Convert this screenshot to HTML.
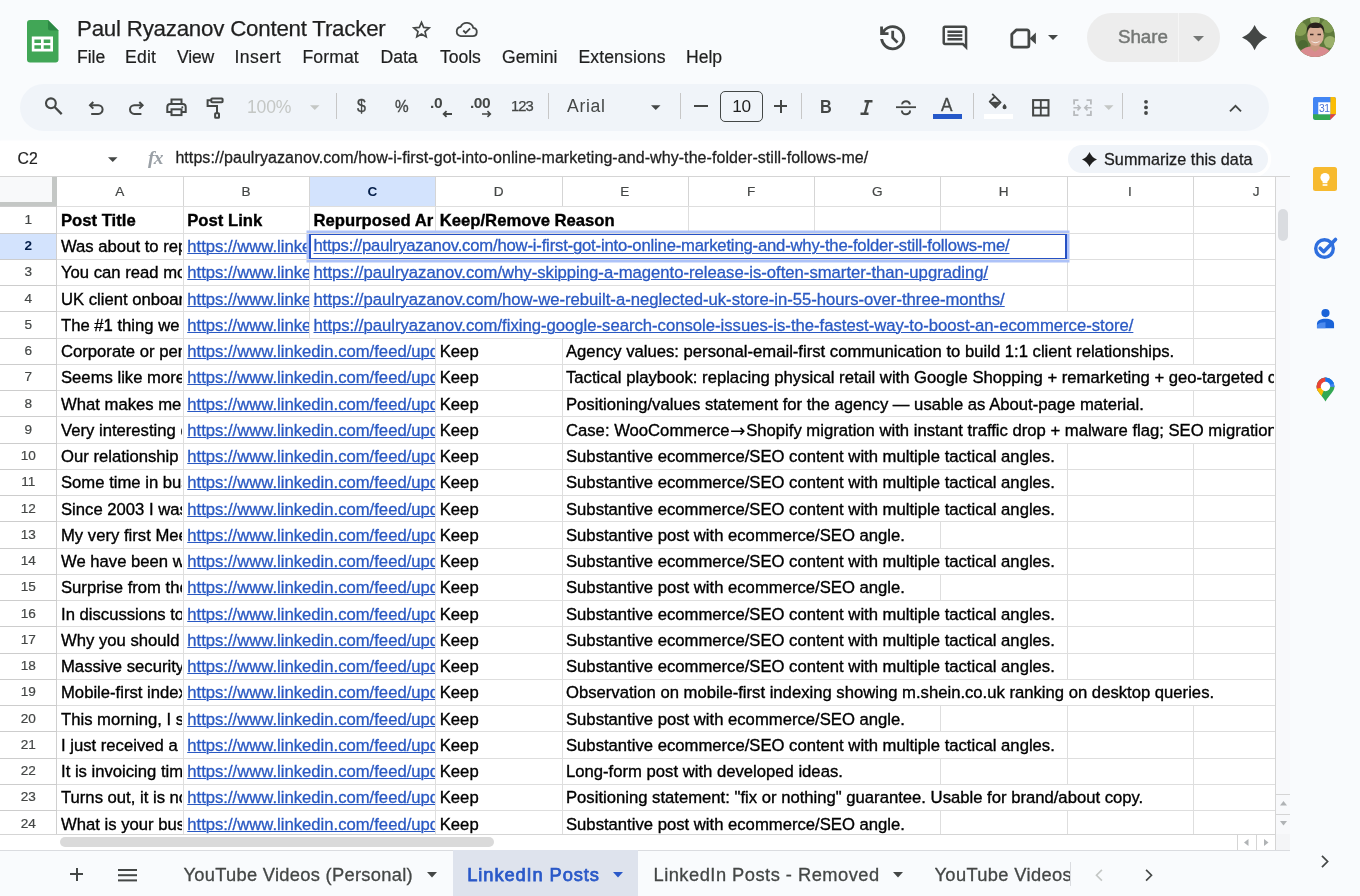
<!DOCTYPE html>
<html lang="en"><head><meta charset="utf-8"><title>Paul Ryazanov Content Tracker - Google Sheets</title>
<style>
*{box-sizing:border-box;margin:0;padding:0}
html,body{width:1360px;height:896px;overflow:hidden;background:#f9fbfd;font-family:"Liberation Sans",Arial,sans-serif;color:#1f1f1f}
.abs{position:absolute}
#app{position:absolute;left:0;top:0;width:1360px;height:896px;overflow:hidden;will-change:transform}
svg{display:block;position:absolute;overflow:visible}
/* ---------- title / menus ---------- */
#title{left:77px;top:13.5px;font-size:22.3px;line-height:30px;color:#1f1f1f;white-space:nowrap;letter-spacing:-0.215px;-webkit-text-stroke:.25px #1f1f1f}
.menu{top:46px;font-size:17.6px;line-height:22px;color:#1f1f1f;white-space:nowrap;letter-spacing:-0.05px;-webkit-text-stroke:.2px #1f1f1f}
/* ---------- toolbar ---------- */
#toolbar{left:20px;top:83.5px;width:1249px;height:47px;border-radius:24px;background:#f0f4f9}
.tsep{top:93px;width:1px;height:26px;background:#c7c7c7}
.ttxt{white-space:nowrap;color:#444746}
/* ---------- formula bar ---------- */
#fbar{left:0;top:141px;width:1271px;height:35.5px;background:#fff;border-radius:0 17.5px 17.5px 0;box-shadow:0 -1px 2px rgba(255,255,255,.7)}
#namebox{left:17.5px;top:149px;font-size:15.8px;line-height:20px;color:#1f1f1f;-webkit-text-stroke:.2px #1f1f1f}
#ftext{left:175.4px;top:148px;font-size:16px;line-height:20px;color:#1f1f1f;white-space:nowrap;letter-spacing:0.068px;-webkit-text-stroke:.28px #1f1f1f}
#summ{left:1068px;top:145px;width:200px;height:28px;border-radius:14px;background:#f0f4f9}
#summ span{position:absolute;left:36px;top:4px;font-size:16.2px;line-height:20px;color:#1f1f1f;white-space:nowrap;letter-spacing:.05px;-webkit-text-stroke:.3px #1f1f1f}
/* ---------- grid ---------- */
#gridwrap{left:0;top:176px;width:1290px;height:674px;background:#fff}
#grid{left:0;top:0;width:1275px;height:834px;overflow:hidden}
.hl{position:absolute;left:0;width:1275px;height:1px;background:linear-gradient(90deg,#cdcdcd 0,#cdcdcd 57px,#dedede 57px);z-index:2}
.vl{position:absolute;width:1px;background:#dedede}
.vlh{position:absolute;top:176.5px;width:1px;height:30px;background:#d5d5d5}
.c{position:absolute;overflow:hidden;white-space:nowrap;font-size:16.67px;line-height:26.25px;padding-left:4px;color:#000;-webkit-text-stroke:.35px #000}
.c span{position:relative;top:1px}
.c.b{font-weight:bold}
.c.a{color:#2a59c3;-webkit-text-stroke:.3px #2a59c3;text-decoration:underline;text-decoration-thickness:1.2px;text-underline-offset:1.5px}
.c.k{letter-spacing:-0.185px}
.c.k span{top:.3px}
.ar{font-style:normal;font-family:'DejaVu Sans',sans-serif;display:inline-block;width:16.67px;text-align:center;font-size:18.5px;line-height:10px;-webkit-text-stroke:0;position:relative;top:1.3px;letter-spacing:0}
.rh{position:absolute;left:0;width:56.5px;text-align:center;font-size:13.6px;line-height:25.5px;color:#444746;-webkit-text-stroke:.2px #444746}
.rh.sel{background:#d3e3fd;color:#041e49;font-weight:bold;-webkit-text-stroke:0}
.ch{position:absolute;top:177px;height:29px;text-align:center;font-size:13.6px;line-height:29px;color:#444746;background:#fff;-webkit-text-stroke:.2px #444746}
.ch.sel{background:#d3e3fd;color:#041e49;font-weight:bold;-webkit-text-stroke:0}
/* ---------- tabs ---------- */
#tabs{left:0;top:850px;width:1290px;height:46px;background:#f9fbfd;border-top:1px solid #dadce0}
.tab{top:863.5px;font-size:18.3px;line-height:22px;white-space:nowrap;color:#444746;letter-spacing:0.36px;-webkit-text-stroke:.3px #444746}
/* ---------- side panel ---------- */
#side{left:1290px;top:76px;width:70px;height:820px;background:#f9fbfd}
</style></head><body>
<div id="app">

<!-- ======== TITLE BAR ======== -->
<svg class="abs" style="left:27px;top:20px" width="31.500" height="42.600" viewBox="0 0 31.500 42.600">
  <path d="M3 0h18l10.500 10.500V39.600a3 3 0 0 1-3 3H3a3 3 0 0 1-3-3V3a3 3 0 0 1 3-3z" fill="#41a656"/>
  <path d="M21 0l10.500 10.500H23.500a2.500 2.500 0 0 1-2.500-2.500z" fill="#2c8844"/>
  <path d="M4.800 16.500h21.200v15H4.800zM7.400 19.500v3.600H14v-3.600zM16.700 19.500v3.600h6.600v-3.600zM7.400 25.300v3.500H14v-3.500zM16.700 25.300v3.500h6.600v-3.500z" fill="#fff" fill-rule="evenodd"/>
</svg>
<div id="title" class="abs">Paul Ryazanov Content Tracker</div>
<!-- star -->
<svg class="abs" style="left:411px;top:18.800px" width="21" height="21" viewBox="0 0 24 24"><path d="M12 3.800l2.450 5.800 6.300.55-4.780 4.140 1.430 6.150L12 17.200l-5.400 3.240 1.430-6.150L3.250 10.150l6.300-.55z" fill="none" stroke="#444746" stroke-width="1.900" stroke-linejoin="miter"/></svg>
<!-- cloud done -->
<svg class="abs" style="left:454.500px;top:21.800px" width="23" height="15.300" viewBox="0 0 24 16"><path d="M6 14.800h12.400a4.300 4.300 0 0 0 .7-8.550A7 7 0 0 0 5.900 5.200 4.850 4.850 0 0 0 6 14.800z" fill="none" stroke="#444746" stroke-width="1.900" stroke-linejoin="round"/><path d="M8.600 8.900l2.500 2.500 4.700-4.800" fill="none" stroke="#444746" stroke-width="1.900"/></svg>

<div class="abs menu" style="left:77px">File</div>
<div class="abs menu" style="left:125px;letter-spacing:.2px">Edit</div>
<div class="abs menu" style="left:177px;letter-spacing:-.2px">View</div>
<div class="abs menu" style="left:234.500px;letter-spacing:.45px">Insert</div>
<div class="abs menu" style="left:302.500px;letter-spacing:.1px">Format</div>
<div class="abs menu" style="left:380.500px">Data</div>
<div class="abs menu" style="left:440px">Tools</div>
<div class="abs menu" style="left:502px">Gemini</div>
<div class="abs menu" style="left:578.500px;letter-spacing:.1px">Extensions</div>
<div class="abs menu" style="left:686px">Help</div>

<!-- history -->
<svg class="abs" style="left:876.400px;top:20.600px" width="33.400" height="33.400" viewBox="0 0 24 24"><path d="M12 21q-3.450 0-6.012-2.287T3.050 13H5.100q.35 2.600 2.313 4.300T12 19q2.925 0 4.963-2.037T19 12t-2.037-4.962T12 5q-1.725 0-3.225.8T6.250 8H9v2H3V4h2v2.350q1.275-1.600 3.113-2.475T12 3q1.875 0 3.513.713t2.850 1.924t1.925 2.850T21 12t-.712 3.513t-1.925 2.850t-2.850 1.925T12 21m2.800-4.800L11 12.400V7h2v4.600l3.200 3.200z" fill="#444746"/></svg>
<!-- comment -->
<svg class="abs" style="left:940.300px;top:22.800px" width="29.800" height="29.800" viewBox="0 0 24 24"><path d="M21.990 4c0-1.100-.89-2-1.990-2H4c-1.100 0-2 .9-2 2v12c0 1.100.9 2 2 2h14l4 4-.01-18zM20 4v13.170L18.830 16H4V4h16zM6 12h12v2H6zm0-3h12v2H6zm0-3h12v2H6z" fill="#444746"/></svg>
<!-- meet cam -->
<svg class="abs" style="left:1009px;top:26.500px" width="28" height="23" viewBox="0 0 28 23"><path d="M7.200 2.900h10.800a1.900 1.900 0 0 1 1.900 1.900v13.400a1.900 1.900 0 0 1-1.900 1.900H4.700a1.900 1.900 0 0 1-1.900-1.900V7.300z" fill="none" stroke="#444746" stroke-width="2.800" stroke-linejoin="round"/><path d="M20.500 11.400l6.400-5.900v11.800z" fill="#444746"/></svg>
<svg class="abs" style="left:1048px;top:35px" width="10" height="5" viewBox="0 0 10 5"><path d="M0 0h10L5 5z" fill="#444746"/></svg>
<!-- share -->
<div class="abs" style="left:1087px;top:13px;width:133px;height:49px;border-radius:25px;background:#ededed"></div>
<div class="abs" style="left:1178px;top:13px;width:1px;height:49px;background:#f6f6f6"></div>
<div class="abs" style="left:1118px;top:24.500px;font-size:18.800px;line-height:24px;color:#747775;-webkit-text-stroke:.45px #747775;letter-spacing:-.05px">Share</div>
<svg class="abs" style="left:1193px;top:36px" width="11" height="5.500" viewBox="0 0 11 5.500"><path d="M0 0h11L5.500 5.500z" fill="#747775"/></svg>
<!-- gemini sparkle -->
<svg class="abs" style="left:1242.400px;top:24.800px" width="25.200" height="25.200" viewBox="0 0 24 24"><path d="M12 0Q15.600 8.400 24 12 15.600 15.600 12 24 8.400 15.600 0 12 8.400 8.400 12 0z" fill="#444746"/></svg>
<!-- avatar -->
<svg class="abs" style="left:1295px;top:17px" width="40" height="40" viewBox="0 0 40 40">
  <defs><clipPath id="av"><circle cx="20" cy="20" r="20"/></clipPath></defs>
  <g clip-path="url(#av)"><rect width="40" height="40" fill="#5f7a3c"/><circle cx="5" cy="12" r="7" fill="#86a055"/><circle cx="33" cy="9" r="7" fill="#7f9a52"/><circle cx="35" cy="25" r="6" fill="#9bb06a"/><circle cx="8" cy="28" r="5" fill="#4c6932"/><circle cx="20" cy="3" r="5" fill="#a3b877"/>
  <path d="M3 40c1-7 6-9.500 12-10.500h10c6 1 11 3.500 12 10.500z" fill="#d98b8f"/><path d="M15.500 26h9v5.500l-4.500 3.500-4.500-3.500z" fill="#c9997f"/>
  <ellipse cx="20.500" cy="18.500" rx="8.300" ry="10.500" fill="#d9ae97"/>
  <path d="M11.800 17c-.8-8 3-11.500 8.700-11.500s9.600 3.500 8.700 11.500c-.8-3.800-2-5.800-3.500-6.500-3 .8-7.500.8-10.500 0-1.500.7-2.700 2.700-3.400 6.500z" fill="#2a211e"/>
  <path d="M16 23.500c2.500 2.300 6.500 2.300 9 0-1.500 3.600-7.500 3.600-9 0z" fill="#f4ebe6"/><path d="M15 17.500h3.500M22.500 17.500H26" stroke="#3b2a24" stroke-width="1.300"/></g>
</svg>

<!-- ======== TOOLBAR ======== -->
<div id="toolbar" class="abs"></div>
<!-- search -->
<svg class="abs" style="left:44px;top:97px" width="19" height="19" viewBox="0 0 19 19"><circle cx="6.900" cy="6.300" r="4.900" fill="none" stroke="#444746" stroke-width="2.100"/><path d="M10.400 9.800l7.300 7.300" stroke="#444746" stroke-width="2.300"/></svg>
<!-- undo -->
<svg class="abs" style="left:88px;top:100px" width="17" height="16" viewBox="0 0 17 16"><path d="M5.300 2L2 5.300l3.300 3.300" fill="none" stroke="#444746" stroke-width="2"/><path d="M2.200 5.300h8.100a4.300 4.300 0 0 1 0 8.600H3.200" fill="none" stroke="#444746" stroke-width="2"/></svg>
<!-- redo -->
<svg class="abs" style="left:128px;top:100px" width="17" height="16" viewBox="0 0 17 16"><path d="M11.300 2l3.300 3.300-3.300 3.300" fill="none" stroke="#444746" stroke-width="2"/><path d="M14.400 5.300H6.300a4.300 4.300 0 0 0 0 8.600h7.100" fill="none" stroke="#444746" stroke-width="2"/></svg>
<!-- print -->
<svg class="abs" style="left:166px;top:97px" width="21" height="20" viewBox="0 0 21 20"><path d="M5.500 7V2.600h10V7" fill="none" stroke="#444746" stroke-width="2"/><path d="M5 15H1.300V10a3 3 0 0 1 3-3h12.400a3 3 0 0 1 3 3v5H16" fill="none" stroke="#444746" stroke-width="2"/><rect x="5.500" y="12.300" width="10" height="5.800" fill="none" stroke="#444746" stroke-width="2"/><circle cx="16.300" cy="10.200" r="1" fill="#444746"/></svg>
<!-- paint format -->
<svg class="abs" style="left:206px;top:96px" width="19" height="23" viewBox="0 0 19 23"><rect x="5.300" y="2.500" width="11.300" height="3.700" rx=".8" fill="none" stroke="#444746" stroke-width="2"/><path d="M5.300 4.300H1.600V10H11v7" fill="none" stroke="#444746" stroke-width="2"/><rect x="9.100" y="17.200" width="3.900" height="4.600" rx=".6" fill="none" stroke="#444746" stroke-width="2"/></svg>
<!-- zoom -->
<div class="abs ttxt" style="left:247px;top:96px;font-size:17.6px;line-height:22px;color:#c4c7c5;letter-spacing:-0.2px">100%</div>
<svg class="abs" style="left:310px;top:104.500px" width="9.500" height="5" viewBox="0 0 10 5"><path d="M0 0h10L5 5z" fill="#c4c7c5"/></svg>
<div class="abs tsep" style="left:336px"></div>
<!-- $ % .0 .00 123 -->
<div class="abs ttxt" style="left:356.800px;top:95px;font-size:17.800px;line-height:22px;-webkit-text-stroke:.35px #444746;transform:scaleX(.9);transform-origin:0 0">$</div>
<div class="abs ttxt" style="left:394.600px;top:94.800px;font-size:16.500px;line-height:22px;-webkit-text-stroke:.35px #444746;transform:scaleX(.93);transform-origin:0 0">%</div>
<div class="abs ttxt" style="left:430px;top:92px;font-size:15.5px;line-height:22px;font-weight:bold;letter-spacing:-0.3px">.0</div>
<svg class="abs" style="left:441.500px;top:110px" width="10" height="8" viewBox="0 0 11 8"><path d="M11 4H2M5 0.800L1.800 4 5 7.200" fill="none" stroke="#444746" stroke-width="2"/></svg>
<div class="abs ttxt" style="left:470px;top:92px;font-size:15.500px;line-height:22px;font-weight:bold;letter-spacing:-0.5px">.00</div>
<svg class="abs" style="left:481.500px;top:110px" width="10" height="8" viewBox="0 0 11 8"><path d="M0 4h9M6 0.800L9.200 4 6 7.200" fill="none" stroke="#444746" stroke-width="1.700"/></svg>
<div class="abs ttxt" style="left:511px;top:95px;font-size:14.800px;line-height:22px;letter-spacing:-0.95px;-webkit-text-stroke:.25px #444746">123</div>
<div class="abs tsep" style="left:548px"></div>
<!-- font -->
<div class="abs ttxt" style="left:567px;top:95px;font-size:17.600px;line-height:22px;letter-spacing:0.65px">Arial</div>
<svg class="abs" style="left:651px;top:104.500px" width="9.500" height="5" viewBox="0 0 10 5"><path d="M0 0h10L5 5z" fill="#444746"/></svg>
<div class="abs tsep" style="left:680px"></div>
<!-- size -->
<div class="abs" style="left:694px;top:105px;width:14px;height:2px;background:#444746"></div>
<div class="abs" style="left:720px;top:91px;width:43px;height:30.500px;border:1.300px solid #444746;border-radius:5px"></div>
<div class="abs ttxt" style="left:720px;top:95px;width:43px;text-align:center;font-size:17.200px;line-height:22px;color:#1f1f1f;letter-spacing:-0.3px">10</div>
<div class="abs" style="left:774px;top:105px;width:13px;height:2px;background:#444746"></div>
<div class="abs" style="left:779.500px;top:99.500px;width:2px;height:13px;background:#444746"></div>
<div class="abs tsep" style="left:801px"></div>
<!-- B I S A -->
<div class="abs ttxt" style="left:820px;top:96.200px;font-size:18.500px;line-height:22px;font-weight:bold;transform:scaleX(.88);transform-origin:0 0">B</div>
<svg class="abs" style="left:860px;top:100.200px" width="13" height="15" viewBox="0 0 13 15"><path d="M4.500 1.300h8M0.500 13.700h8M8.200 1.300L4.800 13.700" stroke="#444746" stroke-width="2.400" fill="none"/></svg>
<svg class="abs" style="left:896px;top:99.800px" width="20" height="16" viewBox="0 0 20 16"><path d="M0 7.200h20" stroke="#444746" stroke-width="1.800"/><path d="M14 4.500C13.500 2.500 12 1.300 10 1.300S6 2.500 6.200 4.300" fill="none" stroke="#444746" stroke-width="2"/><path d="M5.800 10.500c.3 2.500 2 3.800 4.200 3.800s4.200-1.300 4-3.800" fill="none" stroke="#444746" stroke-width="2"/></svg>
<div class="abs ttxt" style="left:941px;top:94px;font-size:17.500px;line-height:22px;-webkit-text-stroke:.35px #444746;transform:scaleX(.98);transform-origin:0 0">A</div>
<div class="abs" style="left:933px;top:114px;width:29px;height:5px;background:#2558c9"></div>
<div class="abs tsep" style="left:973px"></div>
<!-- fill -->
<svg class="abs" style="left:988px;top:93.300px" width="20.500" height="18.600" viewBox="0 0 22 20"><path d="M4.500 1L13.500 10 8 15.500 1.800 9.300 7.500 3.800" fill="none" stroke="#444746" stroke-width="2" stroke-linejoin="round"/><path d="M2.300 9.300h10.600L8 14.500z" fill="#444746"/><path d="M17.800 11.500s2.200 2.500 2.200 3.900a2.200 2.200 0 0 1-4.400 0c0-1.400 2.200-3.900 2.200-3.900z" fill="#444746"/></svg>
<div class="abs" style="left:984px;top:114px;width:29px;height:5px;background:#fff"></div>
<!-- borders -->
<svg class="abs" style="left:1032px;top:98.700px" width="17.600" height="17.600" viewBox="0 0 19 19"><rect x="1.200" y="1.200" width="16.600" height="16.600" fill="none" stroke="#444746" stroke-width="2.200"/><path d="M9.500 1v17M1 9.500h17" stroke="#444746" stroke-width="2"/></svg>
<!-- merge -->
<svg class="abs" style="left:1073px;top:98.700px" width="19" height="17.400" viewBox="0 0 21 19"><path d="M6 1.200H1.200V6M1.200 13v4.800H6M15 1.200h4.800V6M19.800 13v4.800H15" fill="none" stroke="#b8bbbe" stroke-width="2"/><path d="M0.500 9.500h7M5 6.500l3 3-3 3M20.500 9.500h-7M16 6.500l-3 3 3 3" fill="none" stroke="#b8bbbe" stroke-width="1.800"/></svg>
<svg class="abs" style="left:1104px;top:104.500px" width="9.500" height="5" viewBox="0 0 10 5"><path d="M0 0h10L5 5z" fill="#c4c7c5"/></svg>
<div class="abs tsep" style="left:1122px"></div>
<!-- more -->
<svg class="abs" style="left:1143px;top:99px" width="6" height="17" viewBox="0 0 6 17"><circle cx="3" cy="2.800" r="1.900" fill="#444746"/><circle cx="3" cy="8.400" r="1.900" fill="#444746"/><circle cx="3" cy="14" r="1.900" fill="#444746"/></svg>
<!-- collapse -->
<svg class="abs" style="left:1228.500px;top:103.500px" width="13" height="8.300" viewBox="0 0 14 9"><path d="M1 8l6-6 6 6" fill="none" stroke="#444746" stroke-width="2"/></svg>


<!-- ======== FORMULA BAR ======== -->
<div id="fbar" class="abs"></div>
<div id="namebox" class="abs">C2</div>
<svg class="abs" style="left:108px;top:157px" width="9.500" height="5" viewBox="0 0 10 5"><path d="M0 0h10L5 5z" fill="#444746"/></svg>
<div class="abs" style="left:148px;top:147px;font-family:'Liberation Serif',serif;font-style:italic;font-weight:bold;font-size:19.500px;line-height:22px;color:#9aa0a6;letter-spacing:-0.8px">fx</div>
<div id="ftext" class="abs">https://paulryazanov.com/how-i-first-got-into-online-marketing-and-why-the-folder-still-follows-me/</div>
<div id="summ" class="abs"><svg style="left:14px;top:7px" width="15" height="15" viewBox="0 0 28 28"><path d="M14 0Q18 10 28 14 18 18 14 28 10 18 0 14 10 10 14 0z" fill="#1f1f1f"/></svg><span>Summarize this data</span></div>

<!-- ======== GRID ======== -->
<div id="gridwrap" class="abs"></div>
<div id="grid" class="abs">
<div class="hl" style="top:206.35px"></div>
<div class="hl" style="top:232.60px"></div>
<div class="hl" style="top:258.85px"></div>
<div class="hl" style="top:285.10px"></div>
<div class="hl" style="top:311.35px"></div>
<div class="hl" style="top:337.60px"></div>
<div class="hl" style="top:363.85px"></div>
<div class="hl" style="top:390.10px"></div>
<div class="hl" style="top:416.35px"></div>
<div class="hl" style="top:442.60px"></div>
<div class="hl" style="top:468.85px"></div>
<div class="hl" style="top:495.10px"></div>
<div class="hl" style="top:521.35px"></div>
<div class="hl" style="top:547.60px"></div>
<div class="hl" style="top:573.85px"></div>
<div class="hl" style="top:600.10px"></div>
<div class="hl" style="top:626.35px"></div>
<div class="hl" style="top:652.60px"></div>
<div class="hl" style="top:678.85px"></div>
<div class="hl" style="top:705.10px"></div>
<div class="hl" style="top:731.35px"></div>
<div class="hl" style="top:757.60px"></div>
<div class="hl" style="top:783.85px"></div>
<div class="hl" style="top:810.10px"></div>
<div class="vl" style="left:182.75px;top:206.85px;height:26.25px"></div>
<div class="vl" style="left:309.00px;top:206.85px;height:26.25px"></div>
<div class="vl" style="left:435.25px;top:206.85px;height:26.25px"></div>
<div class="vl" style="left:687.75px;top:206.85px;height:26.25px"></div>
<div class="vl" style="left:814.00px;top:206.85px;height:26.25px"></div>
<div class="vl" style="left:940.25px;top:206.85px;height:26.25px"></div>
<div class="vl" style="left:1066.50px;top:206.85px;height:26.25px"></div>
<div class="vl" style="left:1192.75px;top:206.85px;height:26.25px"></div>
<div class="vl" style="left:182.75px;top:233.10px;height:26.25px"></div>
<div class="vl" style="left:309.00px;top:233.10px;height:26.25px"></div>
<div class="vl" style="left:1192.75px;top:233.10px;height:26.25px"></div>
<div class="vl" style="left:182.75px;top:259.35px;height:26.25px"></div>
<div class="vl" style="left:309.00px;top:259.35px;height:26.25px"></div>
<div class="vl" style="left:1066.50px;top:259.35px;height:26.25px"></div>
<div class="vl" style="left:1192.75px;top:259.35px;height:26.25px"></div>
<div class="vl" style="left:182.75px;top:285.60px;height:26.25px"></div>
<div class="vl" style="left:309.00px;top:285.60px;height:26.25px"></div>
<div class="vl" style="left:1066.50px;top:285.60px;height:26.25px"></div>
<div class="vl" style="left:1192.75px;top:285.60px;height:26.25px"></div>
<div class="vl" style="left:182.75px;top:311.85px;height:26.25px"></div>
<div class="vl" style="left:309.00px;top:311.85px;height:26.25px"></div>
<div class="vl" style="left:1192.75px;top:311.85px;height:26.25px"></div>
<div class="vl" style="left:182.75px;top:338.10px;height:26.25px"></div>
<div class="vl" style="left:435.25px;top:338.10px;height:26.25px"></div>
<div class="vl" style="left:561.50px;top:338.10px;height:26.25px"></div>
<div class="vl" style="left:1192.75px;top:338.10px;height:26.25px"></div>
<div class="vl" style="left:182.75px;top:364.35px;height:26.25px"></div>
<div class="vl" style="left:435.25px;top:364.35px;height:26.25px"></div>
<div class="vl" style="left:561.50px;top:364.35px;height:26.25px"></div>
<div class="vl" style="left:182.75px;top:390.60px;height:26.25px"></div>
<div class="vl" style="left:435.25px;top:390.60px;height:26.25px"></div>
<div class="vl" style="left:561.50px;top:390.60px;height:26.25px"></div>
<div class="vl" style="left:1192.75px;top:390.60px;height:26.25px"></div>
<div class="vl" style="left:182.75px;top:416.85px;height:26.25px"></div>
<div class="vl" style="left:435.25px;top:416.85px;height:26.25px"></div>
<div class="vl" style="left:561.50px;top:416.85px;height:26.25px"></div>
<div class="vl" style="left:182.75px;top:443.10px;height:26.25px"></div>
<div class="vl" style="left:435.25px;top:443.10px;height:26.25px"></div>
<div class="vl" style="left:561.50px;top:443.10px;height:26.25px"></div>
<div class="vl" style="left:1066.50px;top:443.10px;height:26.25px"></div>
<div class="vl" style="left:1192.75px;top:443.10px;height:26.25px"></div>
<div class="vl" style="left:182.75px;top:469.35px;height:26.25px"></div>
<div class="vl" style="left:435.25px;top:469.35px;height:26.25px"></div>
<div class="vl" style="left:561.50px;top:469.35px;height:26.25px"></div>
<div class="vl" style="left:1066.50px;top:469.35px;height:26.25px"></div>
<div class="vl" style="left:1192.75px;top:469.35px;height:26.25px"></div>
<div class="vl" style="left:182.75px;top:495.60px;height:26.25px"></div>
<div class="vl" style="left:435.25px;top:495.60px;height:26.25px"></div>
<div class="vl" style="left:561.50px;top:495.60px;height:26.25px"></div>
<div class="vl" style="left:1066.50px;top:495.60px;height:26.25px"></div>
<div class="vl" style="left:1192.75px;top:495.60px;height:26.25px"></div>
<div class="vl" style="left:182.75px;top:521.85px;height:26.25px"></div>
<div class="vl" style="left:435.25px;top:521.85px;height:26.25px"></div>
<div class="vl" style="left:561.50px;top:521.85px;height:26.25px"></div>
<div class="vl" style="left:940.25px;top:521.85px;height:26.25px"></div>
<div class="vl" style="left:1066.50px;top:521.85px;height:26.25px"></div>
<div class="vl" style="left:1192.75px;top:521.85px;height:26.25px"></div>
<div class="vl" style="left:182.75px;top:548.10px;height:26.25px"></div>
<div class="vl" style="left:435.25px;top:548.10px;height:26.25px"></div>
<div class="vl" style="left:561.50px;top:548.10px;height:26.25px"></div>
<div class="vl" style="left:1066.50px;top:548.10px;height:26.25px"></div>
<div class="vl" style="left:1192.75px;top:548.10px;height:26.25px"></div>
<div class="vl" style="left:182.75px;top:574.35px;height:26.25px"></div>
<div class="vl" style="left:435.25px;top:574.35px;height:26.25px"></div>
<div class="vl" style="left:561.50px;top:574.35px;height:26.25px"></div>
<div class="vl" style="left:940.25px;top:574.35px;height:26.25px"></div>
<div class="vl" style="left:1066.50px;top:574.35px;height:26.25px"></div>
<div class="vl" style="left:1192.75px;top:574.35px;height:26.25px"></div>
<div class="vl" style="left:182.75px;top:600.60px;height:26.25px"></div>
<div class="vl" style="left:435.25px;top:600.60px;height:26.25px"></div>
<div class="vl" style="left:561.50px;top:600.60px;height:26.25px"></div>
<div class="vl" style="left:1066.50px;top:600.60px;height:26.25px"></div>
<div class="vl" style="left:1192.75px;top:600.60px;height:26.25px"></div>
<div class="vl" style="left:182.75px;top:626.85px;height:26.25px"></div>
<div class="vl" style="left:435.25px;top:626.85px;height:26.25px"></div>
<div class="vl" style="left:561.50px;top:626.85px;height:26.25px"></div>
<div class="vl" style="left:1066.50px;top:626.85px;height:26.25px"></div>
<div class="vl" style="left:1192.75px;top:626.85px;height:26.25px"></div>
<div class="vl" style="left:182.75px;top:653.10px;height:26.25px"></div>
<div class="vl" style="left:435.25px;top:653.10px;height:26.25px"></div>
<div class="vl" style="left:561.50px;top:653.10px;height:26.25px"></div>
<div class="vl" style="left:1066.50px;top:653.10px;height:26.25px"></div>
<div class="vl" style="left:1192.75px;top:653.10px;height:26.25px"></div>
<div class="vl" style="left:182.75px;top:679.35px;height:26.25px"></div>
<div class="vl" style="left:435.25px;top:679.35px;height:26.25px"></div>
<div class="vl" style="left:561.50px;top:679.35px;height:26.25px"></div>
<div class="vl" style="left:182.75px;top:705.60px;height:26.25px"></div>
<div class="vl" style="left:435.25px;top:705.60px;height:26.25px"></div>
<div class="vl" style="left:561.50px;top:705.60px;height:26.25px"></div>
<div class="vl" style="left:940.25px;top:705.60px;height:26.25px"></div>
<div class="vl" style="left:1066.50px;top:705.60px;height:26.25px"></div>
<div class="vl" style="left:1192.75px;top:705.60px;height:26.25px"></div>
<div class="vl" style="left:182.75px;top:731.85px;height:26.25px"></div>
<div class="vl" style="left:435.25px;top:731.85px;height:26.25px"></div>
<div class="vl" style="left:561.50px;top:731.85px;height:26.25px"></div>
<div class="vl" style="left:1066.50px;top:731.85px;height:26.25px"></div>
<div class="vl" style="left:1192.75px;top:731.85px;height:26.25px"></div>
<div class="vl" style="left:182.75px;top:758.10px;height:26.25px"></div>
<div class="vl" style="left:435.25px;top:758.10px;height:26.25px"></div>
<div class="vl" style="left:561.50px;top:758.10px;height:26.25px"></div>
<div class="vl" style="left:940.25px;top:758.10px;height:26.25px"></div>
<div class="vl" style="left:1066.50px;top:758.10px;height:26.25px"></div>
<div class="vl" style="left:1192.75px;top:758.10px;height:26.25px"></div>
<div class="vl" style="left:182.75px;top:784.35px;height:26.25px"></div>
<div class="vl" style="left:435.25px;top:784.35px;height:26.25px"></div>
<div class="vl" style="left:561.50px;top:784.35px;height:26.25px"></div>
<div class="vl" style="left:1192.75px;top:784.35px;height:26.25px"></div>
<div class="vl" style="left:182.75px;top:810.60px;height:23.90px"></div>
<div class="vl" style="left:435.25px;top:810.60px;height:23.90px"></div>
<div class="vl" style="left:561.50px;top:810.60px;height:23.90px"></div>
<div class="vl" style="left:940.25px;top:810.60px;height:23.90px"></div>
<div class="vl" style="left:1066.50px;top:810.60px;height:23.90px"></div>
<div class="vl" style="left:1192.75px;top:810.60px;height:23.90px"></div>
<div class="c b" style="left:57.00px;top:206.85px;width:125.25px;height:26.25px"><span>Post Title</span></div>
<div class="c " style="left:57.00px;top:233.10px;width:125.25px;height:26.25px"><span>Was about to repost this</span></div>
<div class="c " style="left:57.00px;top:259.35px;width:125.25px;height:26.25px"><span>You can read more about</span></div>
<div class="c " style="left:57.00px;top:285.60px;width:125.25px;height:26.25px"><span>UK client onboarding</span></div>
<div class="c " style="left:57.00px;top:311.85px;width:125.25px;height:26.25px"><span>The #1 thing we fix</span></div>
<div class="c " style="left:57.00px;top:338.10px;width:125.25px;height:26.25px"><span>Corporate or personal</span></div>
<div class="c " style="left:57.00px;top:364.35px;width:125.25px;height:26.25px"><span>Seems like more and</span></div>
<div class="c " style="left:57.00px;top:390.60px;width:125.25px;height:26.25px"><span>What makes me different</span></div>
<div class="c " style="left:57.00px;top:416.85px;width:125.25px;height:26.25px"><span>Very interesting case</span></div>
<div class="c " style="left:57.00px;top:443.10px;width:125.25px;height:26.25px"><span>Our relationship with</span></div>
<div class="c " style="left:57.00px;top:469.35px;width:125.25px;height:26.25px"><span>Some time in business</span></div>
<div class="c " style="left:57.00px;top:495.60px;width:125.25px;height:26.25px"><span>Since 2003 I was</span></div>
<div class="c " style="left:57.00px;top:521.85px;width:125.25px;height:26.25px"><span>My very first Meetup</span></div>
<div class="c " style="left:57.00px;top:548.10px;width:125.25px;height:26.25px"><span>We have been working</span></div>
<div class="c " style="left:57.00px;top:574.35px;width:125.25px;height:26.25px"><span>Surprise from the</span></div>
<div class="c " style="left:57.00px;top:600.60px;width:125.25px;height:26.25px"><span>In discussions today</span></div>
<div class="c " style="left:57.00px;top:626.85px;width:125.25px;height:26.25px"><span>Why you should never</span></div>
<div class="c " style="left:57.00px;top:653.10px;width:125.25px;height:26.25px"><span>Massive security breach</span></div>
<div class="c " style="left:57.00px;top:679.35px;width:125.25px;height:26.25px"><span>Mobile-first indexing</span></div>
<div class="c " style="left:57.00px;top:705.60px;width:125.25px;height:26.25px"><span>This morning, I saw</span></div>
<div class="c " style="left:57.00px;top:731.85px;width:125.25px;height:26.25px"><span>I just received a call</span></div>
<div class="c " style="left:57.00px;top:758.10px;width:125.25px;height:26.25px"><span>It is invoicing time</span></div>
<div class="c " style="left:57.00px;top:784.35px;width:125.25px;height:26.25px"><span>Turns out, it is not</span></div>
<div class="c " style="left:57.00px;top:810.60px;width:125.25px;height:23.90px"><span>What is your business</span></div>
<div class="c b" style="left:183.25px;top:206.85px;width:125.25px;height:26.25px"><span>Post Link</span></div>
<div class="c b" style="left:309.50px;top:206.85px;width:125.25px;height:26.25px"><span>Repurposed Ar</span></div>
<div class="c b" style="left:435.75px;top:206.85px;width:251.50px;height:26.25px"><span>Keep/Remove Reason</span></div>
<div class="c a" style="left:183.25px;top:233.10px;width:125.25px;height:26.25px"><span>https://www.linkedin.com/feed/update/urn:li:activity:7000000000000000000/</span></div>
<div class="c a k" style="left:309.50px;top:233.10px;width:964.50px;height:26.25px"><span>https://paulryazanov.com/how-i-first-got-into-online-marketing-and-why-the-folder-still-follows-me/</span></div>
<div class="c a" style="left:183.25px;top:259.35px;width:125.25px;height:26.25px"><span>https://www.linkedin.com/feed/update/urn:li:activity:7000000000000000000/</span></div>
<div class="c a" style="left:309.50px;top:259.35px;width:964.50px;height:26.25px"><span>https://paulryazanov.com/why-skipping-a-magento-release-is-often-smarter-than-upgrading/</span></div>
<div class="c a" style="left:183.25px;top:285.60px;width:125.25px;height:26.25px"><span>https://www.linkedin.com/feed/update/urn:li:activity:7000000000000000000/</span></div>
<div class="c a" style="left:309.50px;top:285.60px;width:964.50px;height:26.25px"><span>https://paulryazanov.com/how-we-rebuilt-a-neglected-uk-store-in-55-hours-over-three-months/</span></div>
<div class="c a" style="left:183.25px;top:311.85px;width:125.25px;height:26.25px"><span>https://www.linkedin.com/feed/update/urn:li:activity:7000000000000000000/</span></div>
<div class="c a" style="left:309.50px;top:311.85px;width:964.50px;height:26.25px"><span>https://paulryazanov.com/fixing-google-search-console-issues-is-the-fastest-way-to-boost-an-ecommerce-store/</span></div>
<div class="c a" style="left:183.25px;top:338.10px;width:251.50px;height:26.25px"><span>https://www.linkedin.com/feed/update/urn:li:activity:7000000000000000000/</span></div>
<div class="c " style="left:435.75px;top:338.10px;width:125.25px;height:26.25px"><span>Keep</span></div>
<div class="c " style="left:562.00px;top:338.10px;width:712.00px;height:26.25px"><span>Agency values: personal-email-first communication to build 1:1 client relationships.</span></div>
<div class="c a" style="left:183.25px;top:364.35px;width:251.50px;height:26.25px"><span>https://www.linkedin.com/feed/update/urn:li:activity:7000000000000000000/</span></div>
<div class="c " style="left:435.75px;top:364.35px;width:125.25px;height:26.25px"><span>Keep</span></div>
<div class="c " style="left:562.00px;top:364.35px;width:712.00px;height:26.25px"><span>Tactical playbook: replacing physical retail with Google Shopping + remarketing + geo-targeted campaigns.</span></div>
<div class="c a" style="left:183.25px;top:390.60px;width:251.50px;height:26.25px"><span>https://www.linkedin.com/feed/update/urn:li:activity:7000000000000000000/</span></div>
<div class="c " style="left:435.75px;top:390.60px;width:125.25px;height:26.25px"><span>Keep</span></div>
<div class="c " style="left:562.00px;top:390.60px;width:712.00px;height:26.25px"><span>Positioning/values statement for the agency — usable as About-page material.</span></div>
<div class="c a" style="left:183.25px;top:416.85px;width:251.50px;height:26.25px"><span>https://www.linkedin.com/feed/update/urn:li:activity:7000000000000000000/</span></div>
<div class="c " style="left:435.75px;top:416.85px;width:125.25px;height:26.25px"><span>Keep</span></div>
<div class="c " style="left:562.00px;top:416.85px;width:712.00px;height:26.25px"><span>Case: WooCommerce<i class="ar">→</i>Shopify migration with instant traffic drop + malware flag; SEO migration checklist.</span></div>
<div class="c a" style="left:183.25px;top:443.10px;width:251.50px;height:26.25px"><span>https://www.linkedin.com/feed/update/urn:li:activity:7000000000000000000/</span></div>
<div class="c " style="left:435.75px;top:443.10px;width:125.25px;height:26.25px"><span>Keep</span></div>
<div class="c " style="left:562.00px;top:443.10px;width:712.00px;height:26.25px"><span>Substantive ecommerce/SEO content with multiple tactical angles.</span></div>
<div class="c a" style="left:183.25px;top:469.35px;width:251.50px;height:26.25px"><span>https://www.linkedin.com/feed/update/urn:li:activity:7000000000000000000/</span></div>
<div class="c " style="left:435.75px;top:469.35px;width:125.25px;height:26.25px"><span>Keep</span></div>
<div class="c " style="left:562.00px;top:469.35px;width:712.00px;height:26.25px"><span>Substantive ecommerce/SEO content with multiple tactical angles.</span></div>
<div class="c a" style="left:183.25px;top:495.60px;width:251.50px;height:26.25px"><span>https://www.linkedin.com/feed/update/urn:li:activity:7000000000000000000/</span></div>
<div class="c " style="left:435.75px;top:495.60px;width:125.25px;height:26.25px"><span>Keep</span></div>
<div class="c " style="left:562.00px;top:495.60px;width:712.00px;height:26.25px"><span>Substantive ecommerce/SEO content with multiple tactical angles.</span></div>
<div class="c a" style="left:183.25px;top:521.85px;width:251.50px;height:26.25px"><span>https://www.linkedin.com/feed/update/urn:li:activity:7000000000000000000/</span></div>
<div class="c " style="left:435.75px;top:521.85px;width:125.25px;height:26.25px"><span>Keep</span></div>
<div class="c " style="left:562.00px;top:521.85px;width:712.00px;height:26.25px"><span>Substantive post with ecommerce/SEO angle.</span></div>
<div class="c a" style="left:183.25px;top:548.10px;width:251.50px;height:26.25px"><span>https://www.linkedin.com/feed/update/urn:li:activity:7000000000000000000/</span></div>
<div class="c " style="left:435.75px;top:548.10px;width:125.25px;height:26.25px"><span>Keep</span></div>
<div class="c " style="left:562.00px;top:548.10px;width:712.00px;height:26.25px"><span>Substantive ecommerce/SEO content with multiple tactical angles.</span></div>
<div class="c a" style="left:183.25px;top:574.35px;width:251.50px;height:26.25px"><span>https://www.linkedin.com/feed/update/urn:li:activity:7000000000000000000/</span></div>
<div class="c " style="left:435.75px;top:574.35px;width:125.25px;height:26.25px"><span>Keep</span></div>
<div class="c " style="left:562.00px;top:574.35px;width:712.00px;height:26.25px"><span>Substantive post with ecommerce/SEO angle.</span></div>
<div class="c a" style="left:183.25px;top:600.60px;width:251.50px;height:26.25px"><span>https://www.linkedin.com/feed/update/urn:li:activity:7000000000000000000/</span></div>
<div class="c " style="left:435.75px;top:600.60px;width:125.25px;height:26.25px"><span>Keep</span></div>
<div class="c " style="left:562.00px;top:600.60px;width:712.00px;height:26.25px"><span>Substantive ecommerce/SEO content with multiple tactical angles.</span></div>
<div class="c a" style="left:183.25px;top:626.85px;width:251.50px;height:26.25px"><span>https://www.linkedin.com/feed/update/urn:li:activity:7000000000000000000/</span></div>
<div class="c " style="left:435.75px;top:626.85px;width:125.25px;height:26.25px"><span>Keep</span></div>
<div class="c " style="left:562.00px;top:626.85px;width:712.00px;height:26.25px"><span>Substantive ecommerce/SEO content with multiple tactical angles.</span></div>
<div class="c a" style="left:183.25px;top:653.10px;width:251.50px;height:26.25px"><span>https://www.linkedin.com/feed/update/urn:li:activity:7000000000000000000/</span></div>
<div class="c " style="left:435.75px;top:653.10px;width:125.25px;height:26.25px"><span>Keep</span></div>
<div class="c " style="left:562.00px;top:653.10px;width:712.00px;height:26.25px"><span>Substantive ecommerce/SEO content with multiple tactical angles.</span></div>
<div class="c a" style="left:183.25px;top:679.35px;width:251.50px;height:26.25px"><span>https://www.linkedin.com/feed/update/urn:li:activity:7000000000000000000/</span></div>
<div class="c " style="left:435.75px;top:679.35px;width:125.25px;height:26.25px"><span>Keep</span></div>
<div class="c " style="left:562.00px;top:679.35px;width:712.00px;height:26.25px"><span>Observation on mobile-first indexing showing m.shein.co.uk ranking on desktop queries.</span></div>
<div class="c a" style="left:183.25px;top:705.60px;width:251.50px;height:26.25px"><span>https://www.linkedin.com/feed/update/urn:li:activity:7000000000000000000/</span></div>
<div class="c " style="left:435.75px;top:705.60px;width:125.25px;height:26.25px"><span>Keep</span></div>
<div class="c " style="left:562.00px;top:705.60px;width:712.00px;height:26.25px"><span>Substantive post with ecommerce/SEO angle.</span></div>
<div class="c a" style="left:183.25px;top:731.85px;width:251.50px;height:26.25px"><span>https://www.linkedin.com/feed/update/urn:li:activity:7000000000000000000/</span></div>
<div class="c " style="left:435.75px;top:731.85px;width:125.25px;height:26.25px"><span>Keep</span></div>
<div class="c " style="left:562.00px;top:731.85px;width:712.00px;height:26.25px"><span>Substantive ecommerce/SEO content with multiple tactical angles.</span></div>
<div class="c a" style="left:183.25px;top:758.10px;width:251.50px;height:26.25px"><span>https://www.linkedin.com/feed/update/urn:li:activity:7000000000000000000/</span></div>
<div class="c " style="left:435.75px;top:758.10px;width:125.25px;height:26.25px"><span>Keep</span></div>
<div class="c " style="left:562.00px;top:758.10px;width:712.00px;height:26.25px"><span>Long-form post with developed ideas.</span></div>
<div class="c a" style="left:183.25px;top:784.35px;width:251.50px;height:26.25px"><span>https://www.linkedin.com/feed/update/urn:li:activity:7000000000000000000/</span></div>
<div class="c " style="left:435.75px;top:784.35px;width:125.25px;height:26.25px"><span>Keep</span></div>
<div class="c " style="left:562.00px;top:784.35px;width:712.00px;height:26.25px"><span>Positioning statement: "fix or nothing" guarantee. Usable for brand/about copy.</span></div>
<div class="c a" style="left:183.25px;top:810.60px;width:251.50px;height:23.90px"><span>https://www.linkedin.com/feed/update/urn:li:activity:7000000000000000000/</span></div>
<div class="c " style="left:435.75px;top:810.60px;width:125.25px;height:23.90px"><span>Keep</span></div>
<div class="c " style="left:562.00px;top:810.60px;width:712.00px;height:23.90px"><span>Substantive post with ecommerce/SEO angle.</span></div>
<div class="rh" style="top:206.85px;height:25.75px"><span>1</span></div>
<div class="rh sel" style="top:233.10px;height:25.75px"><span>2</span></div>
<div class="rh" style="top:259.35px;height:25.75px"><span>3</span></div>
<div class="rh" style="top:285.60px;height:25.75px"><span>4</span></div>
<div class="rh" style="top:311.85px;height:25.75px"><span>5</span></div>
<div class="rh" style="top:338.10px;height:25.75px"><span>6</span></div>
<div class="rh" style="top:364.35px;height:25.75px"><span>7</span></div>
<div class="rh" style="top:390.60px;height:25.75px"><span>8</span></div>
<div class="rh" style="top:416.85px;height:25.75px"><span>9</span></div>
<div class="rh" style="top:443.10px;height:25.75px"><span>10</span></div>
<div class="rh" style="top:469.35px;height:25.75px"><span>11</span></div>
<div class="rh" style="top:495.60px;height:25.75px"><span>12</span></div>
<div class="rh" style="top:521.85px;height:25.75px"><span>13</span></div>
<div class="rh" style="top:548.10px;height:25.75px"><span>14</span></div>
<div class="rh" style="top:574.35px;height:25.75px"><span>15</span></div>
<div class="rh" style="top:600.60px;height:25.75px"><span>16</span></div>
<div class="rh" style="top:626.85px;height:25.75px"><span>17</span></div>
<div class="rh" style="top:653.10px;height:25.75px"><span>18</span></div>
<div class="rh" style="top:679.35px;height:25.75px"><span>19</span></div>
<div class="rh" style="top:705.60px;height:25.75px"><span>20</span></div>
<div class="rh" style="top:731.85px;height:25.75px"><span>21</span></div>
<div class="rh" style="top:758.10px;height:25.75px"><span>22</span></div>
<div class="rh" style="top:784.35px;height:25.75px"><span>23</span></div>
<div class="rh" style="top:810.60px;height:23.40px"><span>24</span></div>
<div class="ch" style="left:57.00px;width:125.75px"><span>A</span></div>
<div class="ch" style="left:183.25px;width:125.75px"><span>B</span></div>
<div class="vlh" style="left:182.75px"></div>
<div class="ch sel" style="left:309.50px;width:125.75px"><span>C</span></div>
<div class="vlh" style="left:309.00px"></div>
<div class="ch" style="left:435.75px;width:125.75px"><span>D</span></div>
<div class="vlh" style="left:435.25px"></div>
<div class="ch" style="left:562.00px;width:125.75px"><span>E</span></div>
<div class="vlh" style="left:561.50px"></div>
<div class="ch" style="left:688.25px;width:125.75px"><span>F</span></div>
<div class="vlh" style="left:687.75px"></div>
<div class="ch" style="left:814.50px;width:125.75px"><span>G</span></div>
<div class="vlh" style="left:814.00px"></div>
<div class="ch" style="left:940.75px;width:125.75px"><span>H</span></div>
<div class="vlh" style="left:940.25px"></div>
<div class="ch" style="left:1067.00px;width:125.75px"><span>I</span></div>
<div class="vlh" style="left:1066.50px"></div>
<div class="ch" style="left:1193.25px;width:125.75px"><span>J</span></div>
<div class="vlh" style="left:1192.75px"></div>
<!-- corner -->
<div class="abs" style="left:0;top:176.500px;width:57px;height:30px;background:#f8f9fa"></div>
<div class="abs" style="left:51.500px;top:176.500px;width:5px;height:30px;background:#c4c7c5"></div>
<div class="abs" style="left:0;top:201.500px;width:56.500px;height:5px;background:#c4c7c5"></div>
<div class="abs" style="left:0;top:176px;width:1275px;height:1px;background:#d5d5d5"></div>
<div class="abs" style="left:56px;top:206px;width:1px;height:630px;background:#d0d0d0"></div>
<div class="abs" style="left:56px;top:205.500px;width:1219px;height:1px;background:#d0d0d0"></div>
<!-- selection -->
<div class="abs" style="left:309px;top:233px;width:758px;height:26.500px;border:2.200px solid #2651c4;box-shadow:0 0 0 2.500px #adc2f8"></div>
</div>
<!-- scrollbars -->
<div class="abs" style="left:1276px;top:177px;width:14px;height:658px;background:#f8f9fb"></div>
<div class="abs" style="left:1275px;top:176px;width:1px;height:674px;background:#d5d5d5"></div>
<div class="abs" style="left:1275px;top:176px;width:15px;height:1px;background:#d5d5d5"></div>
<div class="abs" style="left:1278px;top:209px;width:10px;height:32px;border-radius:5px;background:#dadce0"></div>
<div class="abs" style="left:0;top:833.800px;width:1290px;height:1px;background:#d5d5d5"></div>
<div class="abs" style="left:60px;top:836.800px;width:434px;height:9.800px;border-radius:5px;background:#dadada"></div>
<div class="abs" style="left:1276px;top:834px;width:14px;height:16px;background:#f4f5f7"></div>
<div class="abs" style="left:1276px;top:794.300px;width:14px;height:1px;background:#d5d5d5"></div>
<div class="abs" style="left:1276px;top:813.600px;width:14px;height:1px;background:#d5d5d5"></div>
<svg class="abs" style="left:1280px;top:800.500px" width="7" height="5" viewBox="0 0 7 5"><path d="M0 4.500h7L3.500 0z" fill="#b0b3b5"/></svg>
<svg class="abs" style="left:1280px;top:821px" width="7" height="5" viewBox="0 0 7 5"><path d="M0 0h7L3.500 4.500z" fill="#b0b3b5"/></svg>
<div class="abs" style="left:1237px;top:835px;width:1px;height:15px;background:#d5d5d5"></div>
<div class="abs" style="left:1256px;top:835px;width:1px;height:15px;background:#d5d5d5"></div>
<svg class="abs" style="left:1244px;top:839px" width="5" height="7" viewBox="0 0 5 7"><path d="M4.500 0v7L0 3.500z" fill="#b0b3b5"/></svg>
<svg class="abs" style="left:1264px;top:839px" width="5" height="7" viewBox="0 0 5 7"><path d="M0 0v7l4.500-3.500z" fill="#b0b3b5"/></svg>


<!-- ======== TABS ======== -->
<div id="tabs" class="abs"></div>
<div class="abs" style="left:453px;top:850px;width:185px;height:46px;background:#dee3ed"></div>
<div class="abs" style="left:70.300px;top:873.400px;width:13px;height:2px;background:#444746"></div>
<div class="abs" style="left:75.800px;top:867.900px;width:2px;height:13px;background:#444746"></div>
<div class="abs" style="left:117.500px;top:868.700px;width:19px;height:2px;background:#444746;box-shadow:0 5.200px 0 #444746,0 10.400px 0 #444746"></div>
<div class="abs tab" style="left:183.500px;letter-spacing:.3px">YouTube Videos (Personal)</div>
<svg class="abs" style="left:427.300px;top:871.700px" width="10" height="6" viewBox="0 0 10 6"><path d="M0 0h10L5 5.500z" fill="#444746"/></svg>
<div class="abs tab" style="left:467.300px;color:#2a59c8;letter-spacing:.9px;-webkit-text-stroke:.75px #2a59c8">LinkedIn Posts</div>
<svg class="abs" style="left:613px;top:872px" width="10" height="6" viewBox="0 0 10 6"><path d="M0 0h10L5 5.500z" fill="#2a59c8"/></svg>
<div class="abs tab" style="left:653.500px;letter-spacing:.49px">LinkedIn Posts - Removed</div>
<svg class="abs" style="left:893px;top:872px" width="10" height="6" viewBox="0 0 10 6"><path d="M0 0h10L5 5.500z" fill="#444746"/></svg>
<div class="abs tab" style="left:934.500px;width:135.500px;overflow:hidden">YouTube Videos (Business)</div>
<div class="abs" style="left:1070px;top:862px;width:1px;height:24px;background:#dadce0"></div>
<svg class="abs" style="left:1095px;top:868.500px" width="8" height="12.500" viewBox="0 0 9 15"><path d="M8 1L1.500 7.500 8 14" fill="none" stroke="#c4c7c5" stroke-width="2"/></svg>
<svg class="abs" style="left:1145px;top:868.500px" width="8" height="12.500" viewBox="0 0 9 15"><path d="M1 1l6.500 6.500L1 14" fill="none" stroke="#444746" stroke-width="2"/></svg>


<!-- ======== SIDE PANEL ======== -->
<div id="side" class="abs"></div>
<!-- calendar -->
<svg class="abs" style="left:1313px;top:97px" width="23" height="23" viewBox="0 0 24 24"><rect x="0" y="0" width="24" height="24" rx="2.500" fill="#4285f4"/><path d="M18 0h3.500A2.500 2.500 0 0 1 24 2.500V18h-6z" fill="#fbbc04"/><path d="M0 18h18v6H2.500A2.500 2.500 0 0 1 0 21.500z" fill="#34a853"/><path d="M18 18h6l-6 6z" fill="#ea4335"/><path d="M24 18v6h-6z" fill="#f9fbfd"/><path d="M0 2.500A2.500 2.500 0 0 1 2.500 0H18v5.500H0z" fill="#4285f4"/><rect x="5.500" y="5.500" width="12.500" height="12.500" fill="#fff"/><text x="11.800" y="15.600" font-family="Liberation Sans,Arial,sans-serif" font-size="10.800" fill="#4a72d6" text-anchor="middle" letter-spacing="-0.4">31</text></svg>
<!-- keep -->
<svg class="abs" style="left:1313px;top:167px" width="24" height="24" viewBox="0 0 24 24"><rect width="24" height="24" rx="2.500" fill="#f7ba2f"/><circle cx="12" cy="10.500" r="4.600" fill="#fff"/><rect x="9.600" y="14" width="4.800" height="2.200" fill="#fff"/><rect x="9.600" y="17.200" width="4.800" height="1.600" fill="#fff"/></svg>
<!-- tasks -->
<svg class="abs" style="left:1313px;top:235.300px" width="25" height="25" viewBox="0 0 25 25"><circle cx="11.500" cy="13.500" r="8.800" fill="none" stroke="#2f6fde" stroke-width="3.400"/><path d="M7.200 13.200l3.500 3.500L22.500 4.500" fill="none" stroke="#2f6fde" stroke-width="3.600" stroke-linecap="round" stroke-linejoin="round"/></svg>
<!-- contacts -->
<svg class="abs" style="left:1315.500px;top:307.800px" width="19" height="21.500" viewBox="0 0 20 22"><circle cx="10" cy="5" r="4.300" fill="#1a63d8"/><path d="M1 21v-4.500C1 12.500 5 11 10 11s9 1.500 9 5.500V21z" fill="#1a63d8"/><path d="M1 21v-3.500c2-2 5-2.800 9-2.800v6.300z" fill="#5e97f6" opacity=".75"/></svg>
<!-- maps -->
<svg class="abs" style="left:1316px;top:377px" width="19" height="25" viewBox="0 0 19 25"><defs><clipPath id="pin"><path d="M9.500 0.500a9 9 0 0 1 9 9c0 5-5 8-9 15-4-7-9-10-9-15a9 9 0 0 1 9-9z"/></clipPath></defs><g clip-path="url(#pin)"><rect width="19" height="25" fill="#34a853"/><path d="M0 0h19v10L9.500 9.500z" fill="#4285f4"/><path d="M0 0h9.500v9.500L0 16z" fill="#ea4335"/><path d="M0 12l9.500-2.500L3 25H0z" fill="#fbbc04"/><path d="M9.500 0H19v6L9.500 9.500z" fill="#1a73e8"/></g><circle cx="9.500" cy="9.500" r="4.700" fill="#fff"/></svg>
<!-- bottom chevron -->
<svg class="abs" style="left:1321px;top:854.500px" width="8" height="13" viewBox="0 0 9 15"><path d="M1 1l6.500 6.500L1 14" fill="none" stroke="#444746" stroke-width="2"/></svg>


</div>
</body></html>
